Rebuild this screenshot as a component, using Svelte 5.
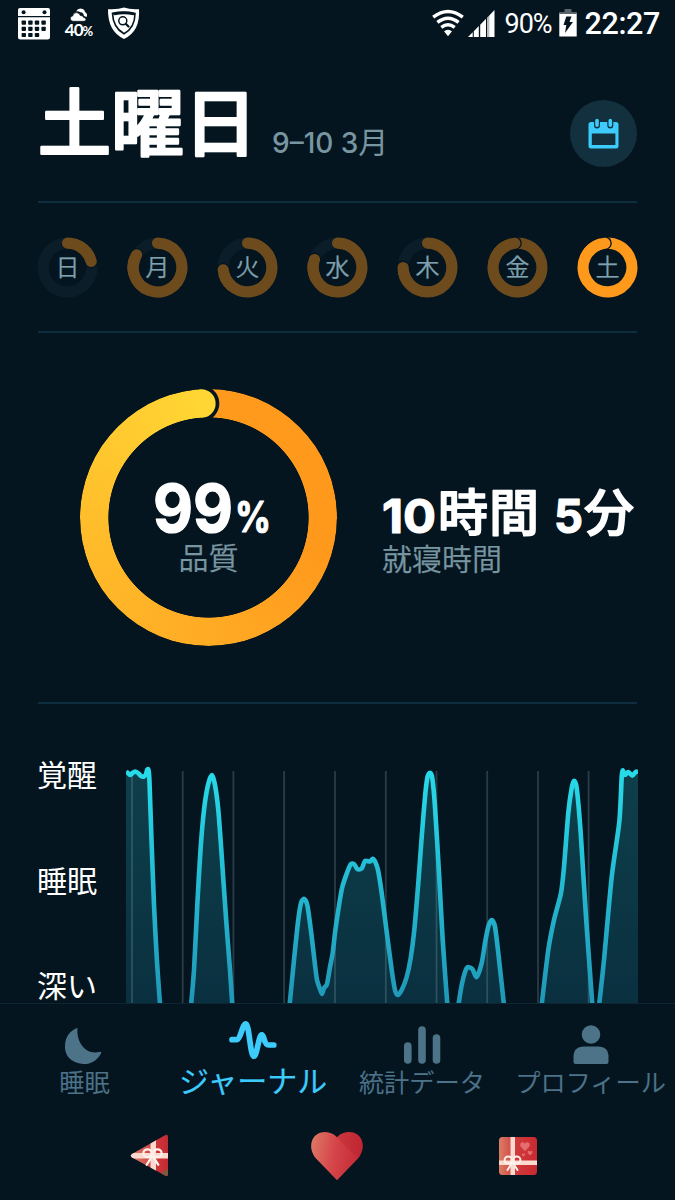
<script>
  const week = [
    { label: '日', value: 0.21 },
    { label: '月', value: 0.837 },
    { label: '火', value: 0.735 },
    { label: '水', value: 0.803 },
    { label: '木', value: 0.75 },
    { label: '金', value: 0.983 },
    { label: '土', value: 0.983, active: true }
  ];

  function point(cx, cy, r, turn) {
    const a = turn * Math.PI * 2;
    return [cx + r * Math.sin(a), cy - r * Math.cos(a)];
  }

  function arc(cx, cy, r, from, to) {
    const [x1, y1] = point(cx, cy, r, from);
    const [x2, y2] = point(cx, cy, r, to);
    return `M${x1} ${y1}A${r} ${r} 0 ${to - from > 0.5 ? 1 : 0} 1 ${x2} ${y2}`;
  }

  const gridLines = [132, 182.7, 233.4, 284.1, 335, 385.8, 436.5, 487.2, 538, 588.6];

  const waves = [
    [[126, 772], [128, 773], [130, 775], [132.5, 773], [135, 771.5], [138, 773], [141, 776], [144, 776.5], [146, 774], [147.3, 769.5], [148.5, 770], [149.5, 782], [151.5, 840], [154, 905], [157, 962], [160.3, 1008]],
    [[190.8, 1008], [194, 970], [197.3, 905], [200.5, 850], [204, 810], [208, 785], [212, 775], [215, 785], [218.3, 810], [221.3, 850], [226, 918], [230, 970], [232.5, 1008]],
    [[289.3, 1008], [294, 960], [298, 922], [301, 903], [304.3, 899], [307.5, 906], [311.5, 935], [315, 965], [317, 980], [320, 989], [322, 994], [324, 988], [327, 984], [330, 967], [332.7, 953], [335, 933], [338, 912], [342.3, 887], [350, 865.5], [354, 864], [357.3, 869], [361.7, 868.5], [365, 861], [370, 861.5], [372.7, 858.7], [375, 861.5], [378, 870], [381.7, 893], [386.7, 932], [391.7, 970], [395, 990], [397.7, 995], [401.7, 990], [406.7, 977], [410.7, 958], [414.3, 930], [418.3, 883], [421.7, 837], [425, 797], [427.3, 778], [430, 772.7], [432.3, 778], [435, 807], [439, 873], [442.7, 940], [447.6, 1008]],
    [[458, 1008], [461.7, 985], [466.7, 968], [472.3, 969], [476.7, 977], [481.7, 963], [485, 943], [488.3, 926.7], [491.7, 920], [495, 926.7], [498.3, 953], [504.3, 1008]],
    [[541.3, 1008], [548.3, 950], [554, 920], [561, 893], [564, 867], [568.3, 813], [571.7, 788], [574, 780.7], [576.7, 788], [580.7, 833], [586, 917], [592.6, 1008]],
    [[598.8, 1008], [604, 960], [611.7, 877], [619.3, 822], [621.7, 777], [622.7, 770.5], [625, 775], [628.3, 772], [632.3, 775.7], [635.5, 772], [638, 771.5]]
  ];

  function smooth(pts) {
    let d = `M${pts[0]}`;
    for (let i = 0; i < pts.length - 1; i++) {
      const a = pts[i - 1] ?? pts[i];
      const b = pts[i];
      const c = pts[i + 1];
      const e = pts[i + 2] ?? c;
      const k = 8;
      d += `C${b[0] + (c[0] - a[0]) / k} ${b[1] + (c[1] - a[1]) / k} ${c[0] - (e[0] - b[0]) / k} ${c[1] - (e[1] - b[1]) / k} ${c[0]} ${c[1]}`;
    }
    return d;
  }

  const close = (pts) => `${smooth(pts)}L${pts[pts.length - 1][0]} 1010L${pts[0][0]} 1010Z`;
  const [capX, capY] = point(128.5, 128.5, 114.2, 0.99);
</script>

{#snippet bow()}
  <g fill="none" stroke="#fff1ea" stroke-width="2" stroke-linecap="round">
    <ellipse cx="-4.3" cy="-2" rx="3.6" ry="3.4" />
    <ellipse cx="4.3" cy="-2" rx="3.6" ry="3.4" />
    <path d="M-.5 1L-5 8M.5 1L5 8" />
  </g>
{/snippet}

<div class="screen">
  <div class="status">
    <svg class="s-cal" width="32" height="32" viewBox="0 0 32 32">
      <path fill="#fff" d="M2 0H30Q32 0 32 2V8H0V2Q0 0 2 0ZM0 9.3H32V29Q32 31.5 29.5 31.5H2.5Q0 31.5 0 29Z" />
      <g fill="#04151f">
        <circle cx="5.6" cy="4.3" r="2" /><circle cx="26.5" cy="4.3" r="2" />
        {#each [12.5, 18.7, 24.9] as y, r}
          {#each [3.6, 10.2, 16.8, 23.4] as x, c}
            {#if r < 2 || c < 3}<rect {x} {y} width="4.4" height="4.2" rx=".8" />{/if}
          {/each}
        {/each}
      </g>
    </svg>
    <div class="weather">
      <svg width="18" height="14" viewBox="0 0 18 14">
        <path fill="#fff" d="M6 3.5Q8 0 11.5.7Q14.500 1 15 4Q18 5.500 16.600 9L14 8Q13.500 4.500 10.500 4.200Q8 2.800 6 3.500Z" />
        <path fill="#fff" stroke="#04151f" stroke-width=".7" d="M3 13.300Q0 13 .3 10Q.8 8 2.700 8Q3.200 4.500 6.500 4.600Q9.600 4.800 10.300 7.500Q13 7.200 13.600 9.500Q16 9.600 16 11.500Q15.800 13.300 14 13.300Z" />
      </svg>
      <span>40<small>%</small></span>
    </div>
    <svg class="s-shield" width="32" height="33" viewBox="0 0 32 33">
      <path fill="#fff" d="M16 .5Q22 2.800 31 2.200Q32.500 24 16 32Q-.5 24 0 2.200Q10 2.800 16 .5Z" />
      <path fill="none" stroke="#04151f" stroke-width="1.600" d="M4.500 6.400Q16 3.500 27 6.400Q27 20.500 16 26.800Q5 20.500 4.500 6.400Z" />
      <path fill="#04151f" d="M5 6Q16 3.500 27 6Q27 8 25.500 8.200Q16 6.500 6.500 8.200Q5 8 5 6Z" />
      <circle cx="14.800" cy="13.800" r="4" fill="none" stroke="#04151f" stroke-width="1.500" />
      <path stroke="#04151f" stroke-width="2.200" stroke-linecap="round" d="M18 17L20.500 19.500" />
    </svg>
    <span class="grow"></span>
    <svg class="s-wifi" width="32" height="27" viewBox="0 0 32 27">
      <g fill="none" stroke="#fff" stroke-width="3.400">
        <path d="M1.200 7.200Q16-4.200 30.800 7.200" /><path d="M5.400 12.400Q16 4 26.600 12.400" /><path d="M9.300 17.300Q16 12.200 22.700 17.300" />
      </g>
      <path fill="#fff" d="M12 21.300Q16 18.300 20 21.300L16 26.300Z" />
    </svg>
    <svg class="s-signal" width="27" height="28" viewBox="0 0 27 28">
      <path fill="#fff" d="M0 27L4.700 22.300V27ZM5.800 21.200L10.800 16.100V27H5.800ZM12.200 14.700L18 8.800V27H12.200ZM19.300 7.500L26.500 0V27H19.300Z" />
      <path stroke="#04151f" stroke-width=".8" d="M20.800 4V27" opacity=".5" />
    </svg>
    <span class="percent">90%</span>
    <svg class="s-battery" width="18" height="28" viewBox="0 0 18 28">
      <path fill="#5a646b" d="M5.500 0H12.500V3H17.500V6H.5V3H5.500Z" />
      <path fill="#fff" d="M.3 4.500H17.700V27.500H.3Z" />
      <path fill="#5a646b" d="M.3 3H17.700V5H.3Z" />
      <path fill="#04151f" d="M7.300 7.500H12.500L10.500 13H14L6 24L7.300 16H4.500Z" />
    </svg>
    <span class="clock">22:27</span>
  </div>

  <header>
    <svg class="title" width="222" height="90" viewBox="0 0 222 90">
      <text x="0" y="67" textLength="219" lengthAdjust="spacing">土曜日</text>
    </svg>
    <span class="date">9–10 3<span>月</span></span>
    <button class="calendar" aria-label="calendar">
      <svg width="31" height="31" viewBox="0 0 31 31">
        <path fill="#3dcbfc" fill-rule="evenodd" d="M3 4H28Q30.500 4 30.500 6.500V28Q30.500 30.500 28 30.500H3Q.5 30.500.5 28V6.500Q.5 4 3 4ZM3.800 15.500V27H27.400V15.500Z" />
        <g stroke="#12303d" stroke-width="6" stroke-linecap="round"><path d="M9 3V7.500M22.300 3V7.500" /></g>
        <g stroke="#3dcbfc" stroke-width="3.600" stroke-linecap="round"><path d="M9 2.600V7.300M22.300 2.600V7.300" /></g>
      </svg>
    </button>
  </header>

  <section class="week">
    {#each week as day}
      <div class="day" class:active={day.active}>
        <svg width="59" height="59" viewBox="0 0 59 59">
          <circle class="track" cx="29.5" cy="29.5" r="24.400" />
          <path class="ring" d={arc(29.5, 29.5, 24.4, 0, day.value)} />
          <circle class="gap" cx={point(29.5, 29.5, 24.4, day.value)[0]} cy={point(29.5, 29.5, 24.4, day.value)[1]} r="6.900" />
          <path class="ring" d={arc(29.5, 29.5, 24.4, day.value - 0.12, day.value)} />
        </svg>
        <span>{day.label}</span>
      </div>
    {/each}
  </section>

  <section class="summary">
    <div class="quality">
      <div class="dial"></div>
      <svg class="cap" width="257" height="257" viewBox="0 0 257 257">
        <g transform="rotate(-3.6 {capX} {capY})">
          <path fill="#04151f" d="M{capX} {capY - 18}a18 18 0 0 1 0 36Z" />
          <path fill="#ffd633" d="M{capX - 1} {capY - 14.3}h1a14.300 14.300 0 0 1 0 28.600h-1Z" />
        </g>
      </svg>
      <div class="reading">
        <svg width="120" height="60" viewBox="0 0 120 60">
          <text class="num" x="1" y="56" textLength="80" lengthAdjust="spacingAndGlyphs" font-size="66">99</text>
          <text class="num" x="83" y="56" textLength="36" lengthAdjust="spacingAndGlyphs" font-size="42">%</text>
        </svg>
        <span>品質</span>
      </div>
    </div>
    <div class="duration">
      <svg width="260" height="60" viewBox="0 0 260 60">
        <text class="num" x="0" y="52" textLength="54" lengthAdjust="spacingAndGlyphs" font-size="47">10</text>
        <text class="kanji" x="56" y="50" textLength="101">時間</text>
        <text class="num" x="172" y="52" textLength="29" lengthAdjust="spacingAndGlyphs" font-size="47">5</text>
        <text class="kanji" x="202" y="50">分</text>
      </svg>
      <span>就寝時間</span>
    </div>
  </section>

  <section class="chart">
    <div class="levels"><span>覚醒</span><span>睡眠</span><span>深い</span></div>
    <svg class="plot" width="512" height="300" viewBox="126 704 512 300">
      <defs>
        <linearGradient id="stroke" gradientUnits="userSpaceOnUse" x1="0" y1="770" x2="0" y2="1004">
          <stop offset="0" stop-color="#27dbea" /><stop offset="1" stop-color="#2097b7" />
        </linearGradient>
        <linearGradient id="fill" gradientUnits="userSpaceOnUse" x1="0" y1="770" x2="0" y2="1004">
          <stop offset="0" stop-color="#0e3f4a" /><stop offset="1" stop-color="#0a3040" />
        </linearGradient>
      </defs>
      {#each waves as wave}<path d={close(wave)} fill="url(#fill)" />{/each}
      {#each gridLines as x}<path d="M{x} 771V1004" stroke="#8fa6ae" stroke-opacity=".27" stroke-width="1.800" />{/each}
      {#each waves as wave}<path d={smooth(wave)} fill="none" stroke="url(#stroke)" stroke-width="4.600" stroke-linejoin="round" />{/each}
    </svg>
  </section>

  <nav class="tabs">
    <div class="tab">
      <svg width="50" height="44" viewBox="0 0 50 44"><path fill="#4d7389" d="M17.300 6.300Q18.600 4.800 18.400 7C17.500 22 28 33 40 30Q43 29.400 42 31.500C38 39 31 42.500 24 42C12 41 5 33 6 23C6.500 15 11 9 17.300 6.300Z" /></svg>
      <span>睡眠</span>
    </div>
    <div class="tab active">
      <svg width="50" height="44" viewBox="0 0 50 44"><path fill="none" stroke="#3dcbfc" stroke-width="5.700" stroke-linecap="round" stroke-linejoin="round" d="M4 17.700H8.500C12.500 17.700 14.500 1.800 17.800 1.800C21.200 1.800 22.300 34.300 25.700 34.300C29.300 34.300 30.500 12.800 33.800 12.800C36.300 12.800 35.800 23 40.500 23H45.800" /></svg>
      <span>ジャーナル</span>
    </div>
    <div class="tab">
      <svg width="50" height="44" viewBox="0 0 50 44"><g stroke="#4d7389" stroke-width="7.600" stroke-linecap="round"><path d="M10.800 24V38M25 8V38M39.500 16V38" /></g></svg>
      <span>統計データ</span>
    </div>
    <div class="tab">
      <svg width="50" height="44" viewBox="0 0 50 44"><circle cx="25" cy="12.500" r="9.300" fill="#4d7389" /><path fill="#4d7389" d="M7.500 40V35Q7.500 24.500 18 24.500H32Q42.500 24.500 42.500 35V40Q42.500 42 40.500 42H9.500Q7.500 42 7.500 40Z" /></svg>
      <span>プロフィール</span>
    </div>
  </nav>

  <div class="system">
    <svg class="back" width="40" height="46" viewBox="0 0 40 46">
      <defs>
        <linearGradient id="tri"><stop offset="0" stop-color="#d98770" /><stop offset=".6" stop-color="#cf3a3c" /><stop offset="1" stop-color="#c02831" /></linearGradient>
        <clipPath id="triClip"><path d="M2 21L35 2.200Q38 1 38 4V41Q38 44 35 42.500L2 24.500Q-.5 22.800 2 21Z" /></clipPath>
      </defs>
      <g clip-path="url(#triClip)">
        <rect width="40" height="46" fill="url(#tri)" />
        <path fill="#80573f" d="M29 41L38 36V45H33Z" />
        <path fill="#fbd9cf" d="M0 20H38V25.500H0ZM20.500 0H26V46H20.500Z" />
      </g>
      <g transform="translate(22.500 22.500) scale(1.150)">{@render bow()}</g>
    </svg>
    <svg class="heart" width="54" height="50" viewBox="0 0 54 50">
      <defs><linearGradient id="heart" x2="1" y2=".15"><stop offset="0" stop-color="#de7b67" /><stop offset=".5" stop-color="#d5454a" /><stop offset="1" stop-color="#c52a35" /></linearGradient></defs>
      <path fill="url(#heart)" d="M27 49.300L6 27.500C-2 18 .5 5 10 1.800C17-.4 23 2 27 6.200C31 2 37-.4 44 1.800C53.500 5 56 18 48 27.500Z" />
      <path fill="#b8222d" opacity=".4" d="M27 6.200C31 2 37-.4 44 1.800C53.500 5 55.500 18 48 27.500Z" />
    </svg>
    <svg class="recent" width="38" height="38" viewBox="0 0 38 38">
      <defs><linearGradient id="gift"><stop offset="0" stop-color="#da7e66" /><stop offset=".45" stop-color="#cf3a3c" /><stop offset="1" stop-color="#ca2931" /></linearGradient></defs>
      <rect width="38" height="38" rx="3.500" fill="url(#gift)" />
      <path fill="#fbd9cf" d="M11.500 0H16V38H11.500ZM0 23.500H38V28H0Z" />
      <g fill="#e46d6d">
        <path d="M26 14.200L21.600 9.500C20 6 24 3.500 26 6.800C28 3.500 32 6 30.400 9.500Z" />
        <path d="M31 18.500L28.700 16C28 14 30 13 31 14.700C32 13 34 14 33.300 16Z" />
        <path d="M24.500 19.500L23 18C22.500 16.500 24 16 24.500 17C25 16 26.500 16.500 26 18Z" />
      </g>
      <g transform="translate(13.500 25)">{@render bow()}</g>
    </svg>
  </div>
</div>

<style>
  :global(body) { background: #04151f; }
  .screen {
    width: 675px; height: 1200px; overflow: hidden; background: #04151f; color: #fff;
    font-family: Inter, "Noto Sans CJK JP", sans-serif; display: flex; flex-direction: column;
  }
  .screen > * { flex: none; }
  svg { display: block; flex: none; overflow: visible; }
  .status { height: 47px; box-sizing: border-box; padding: 0 15px 0 18px; display: flex; align-items: center; }
  .weather { width: 29px; margin-left: 14px; display: flex; flex-direction: column; align-items: center; }
  .weather span { font: 700 17px/16px Lato, sans-serif; letter-spacing: -1px; }
  .weather small { font-size: 13px; }
  .s-shield { margin-left: 15px; }
  .grow { flex: 1; }
  .s-signal { margin-left: 4px; }
  .percent { font: 400 27px/30px Roboto, sans-serif; margin: 1px 0 0 9px; letter-spacing: -1px; }
  .s-battery { margin-left: 7px; margin-top: -1px; }
  .clock { font: 500 30.500px/32px Roboto, sans-serif; margin: 1px 0 0 8px; letter-spacing: -.4px; }

  header {
    height: 156px; box-sizing: border-box; margin: 0 38px; padding-top: 36px;
    display: flex; align-items: flex-start; border-bottom: 2px solid #0e2d3f;
  }
  .title text {
    font: 500 73px "Noto Sans CJK JP", sans-serif; fill: #fff; stroke: #fff; stroke-width: 2.500px; stroke-linejoin: round;
  }
  .date { font: 500 28px/40px Inter, sans-serif; color: #7896a1; margin: 37px 0 0 12px; white-space: nowrap; }
  .date span { font-family: "Noto Sans CJK JP", sans-serif; font-weight: 400; font-size: 30px; }
  .calendar {
    margin: 17px 0 0 auto; padding: 0; width: 67px; height: 67px; border: 0; border-radius: 50%; background: #12303d;
    display: flex; align-items: center; justify-content: center;
  }

  .week {
    height: 130px; box-sizing: border-box; margin: 0 38px; border-bottom: 2px solid #0e2d3f;
    display: flex; justify-content: space-between; align-items: center;
  }
  .day { width: 59px; height: 59px; display: grid; place-items: center; }
  .day > * { grid-area: 1 / 1; }
  .day span { font: 350 24px/24px "Noto Sans CJK JP", sans-serif; color: #7fa0ae; margin-top: -2px; -webkit-text-stroke: .25px currentColor; }
  .track { fill: none; stroke: #0b1d29; stroke-width: 11.200; }
  .ring { fill: none; stroke: #6e4b1d; stroke-width: 11.200; stroke-linecap: round; }
  .active .ring { stroke: #ff991c; }
  .gap { fill: #04151f; }

  .summary {
    height: 371px; box-sizing: border-box; margin: 0 38px; border-bottom: 2px solid #0e2d3f;
    display: flex; align-items: center;
  }
  .quality { width: 257px; height: 257px; margin-left: 42px; display: grid; place-items: center; }
  .quality > * { grid-area: 1 / 1; isolation: isolate; }
  .dial {
    width: 257px; height: 257px; border-radius: 50%;
    background: conic-gradient(#ff9a1c, #ff991c 30%, #ffab24 50%, #ffbe2b 75%, #ffd633 99%, #ff9a1c 99%);
    mask: radial-gradient(circle, transparent 99.800px, #000 100.500px);
  }
  .reading { display: flex; flex-direction: column; align-items: center; padding-top: 17px; }
  .reading svg { margin: -1px 0 0 7px; }
  .reading span, .duration span {
    font: 350 30px/40px "Noto Sans CJK JP", sans-serif; color: #7896a1; -webkit-text-stroke: .25px currentColor;
  }
  .num { font-family: Inter, sans-serif; font-weight: 700; fill: #fff; stroke: #fff; stroke-width: 1.200px; stroke-linejoin: round; }
  .kanji { font: 500 50px "Noto Sans CJK JP", sans-serif; fill: #fff; stroke: #fff; stroke-width: 1.500px; stroke-linejoin: round; }
  .duration { margin: 22px 0 0 45px; width: 255px; display: flex; flex-direction: column; }
  .duration span { margin-top: -4px; }

  .chart { height: 299px; margin: 0 37px 0 37px; display: flex; overflow: hidden; }
  .plot { overflow: hidden; }
  .levels { width: 89px; flex: none; display: flex; flex-direction: column; padding-top: 49px; }
  .levels span { font: 400 30px/40px "Noto Sans CJK JP", sans-serif; height: 105.500px; flex: none; }

  .tabs { height: 107px; box-sizing: border-box; border-top: 1px solid #0c2634; display: flex; }
  .tab { flex: 1 1 0; min-width: 0; display: flex; flex-direction: column; align-items: center; padding-top: 18px; }
  .tab span { font: 350 25.200px/36px "Noto Sans CJK JP", sans-serif; color: #4d7389; white-space: nowrap; margin-top: -3px; -webkit-text-stroke: .2px currentColor; }
  .tab.active span { font-size: 30px; font-weight: 400; color: #3dcbfc; margin-top: -5px; }

  .system { height: 90px; box-sizing: border-box; padding: 2px 138px 0 130px; display: flex; align-items: center; justify-content: space-between; }
  .heart { margin-left: 5px; }
</style>
